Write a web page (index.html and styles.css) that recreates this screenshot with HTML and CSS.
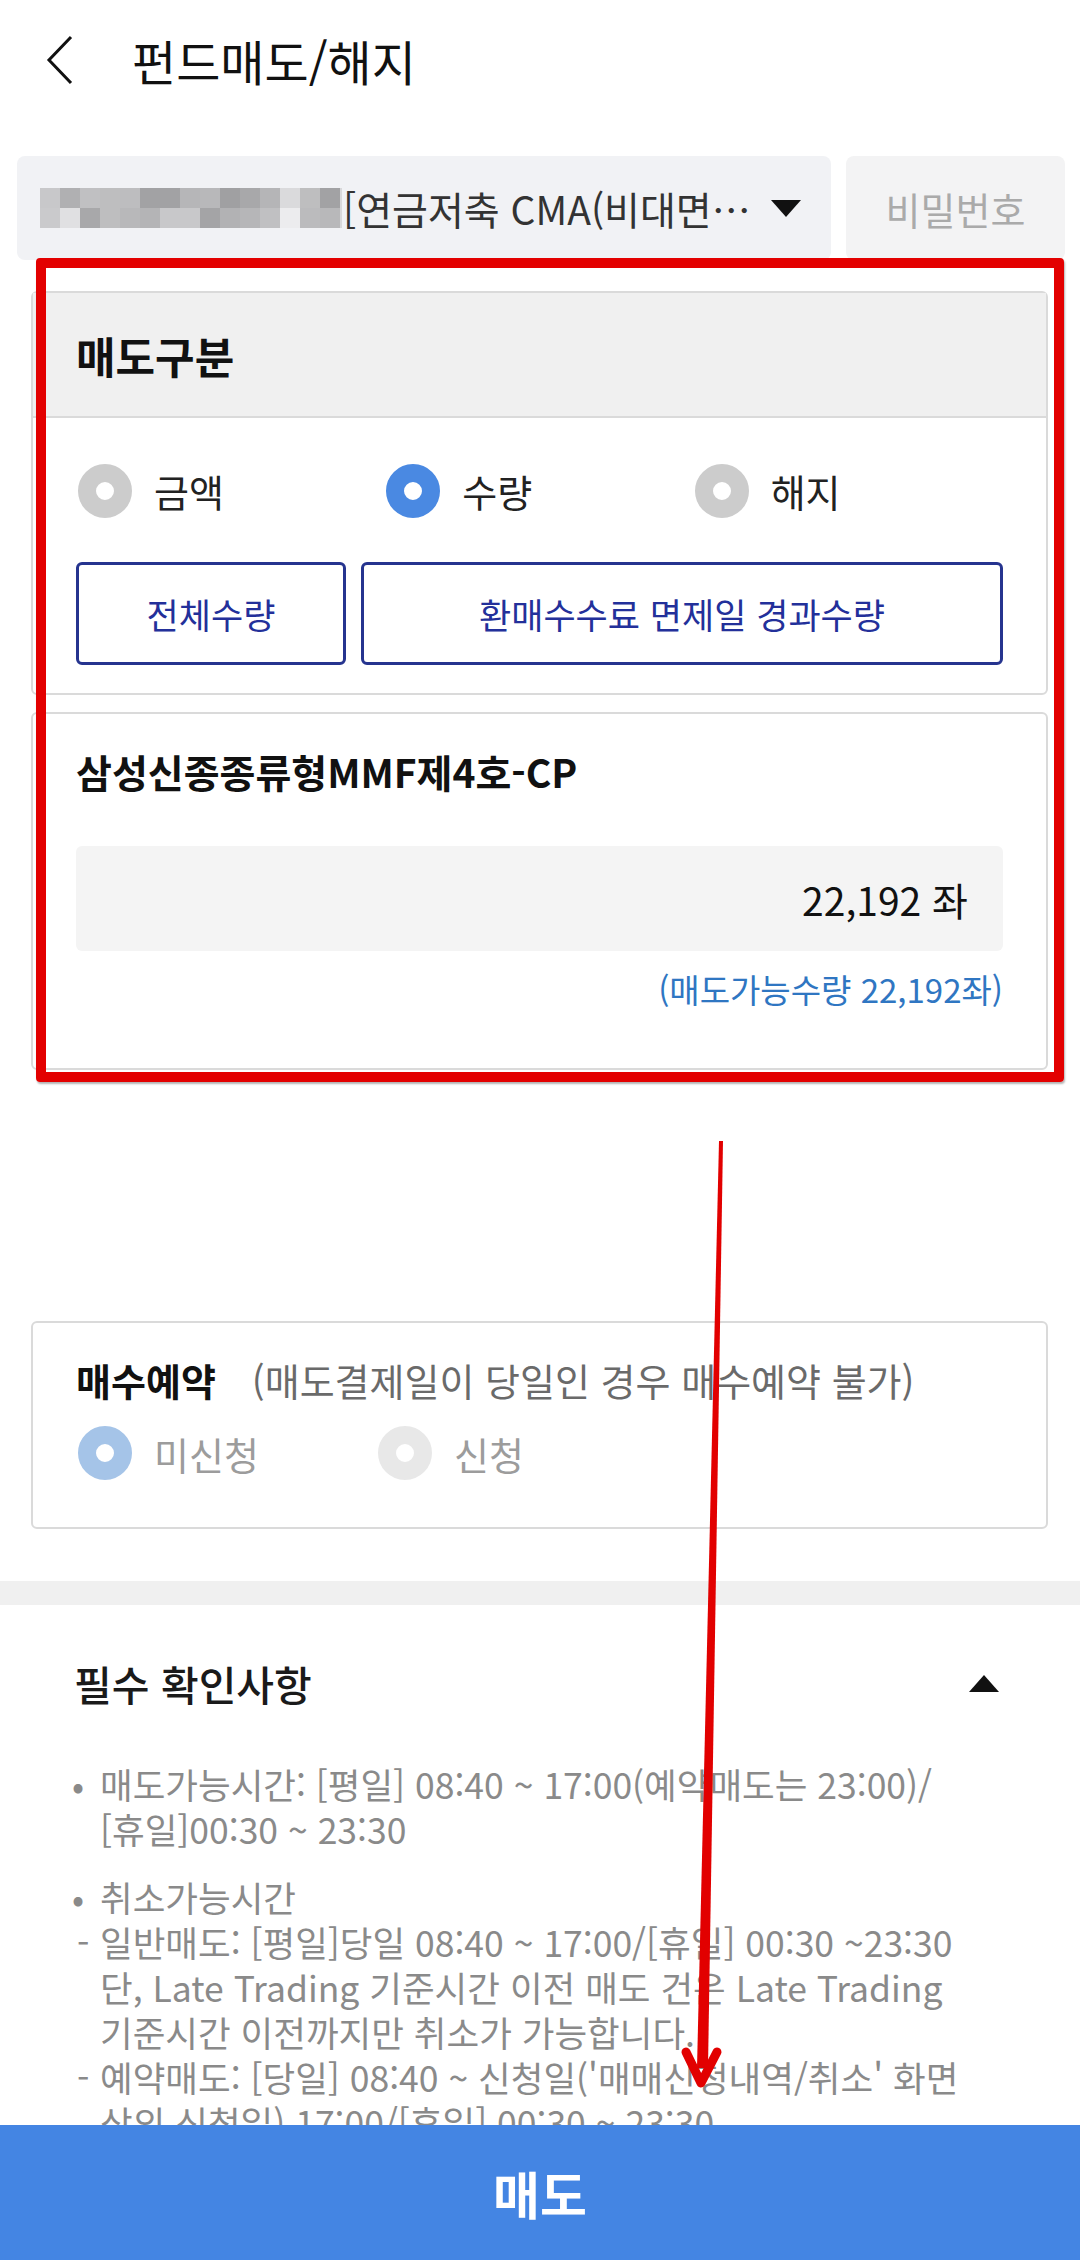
FILE: index.html
```html
<!DOCTYPE html>
<html lang="ko">
<head>
    <meta charset="UTF-8">
    <meta name="viewport" content="width=device-width, initial-scale=1.0">
    <title>펀드매도/해지</title>
    <link rel="stylesheet" href="styles.css">
</head>
<body>
    <div class="page">
        <div class="scroll">
            <header class="top-bar">
                <svg class="back" width="30" height="50" viewBox="0 0 30 50">
                    <polyline points="26,2 4,25 26,48" fill="none" stroke="#111" stroke-width="3"/>
                </svg>
                <h1>펀드매도/해지</h1>
            </header>

            <div class="account-row">
                <div class="account-select">
                    <svg class="masked" width="302" height="40" viewBox="0 0 302 40">
                        <rect x="0" y="0" width="20" height="20" fill="#c8c8ca"/>
                        <rect x="20" y="0" width="20" height="20" fill="#b0b0b2"/>
                        <rect x="40" y="0" width="20" height="20" fill="#c0c0c2"/>
                        <rect x="60" y="0" width="20" height="20" fill="#bebebf"/>
                        <rect x="80" y="0" width="20" height="20" fill="#bdbdbf"/>
                        <rect x="100" y="0" width="20" height="20" fill="#a2a2a4"/>
                        <rect x="120" y="0" width="20" height="20" fill="#a2a2a4"/>
                        <rect x="140" y="0" width="20" height="20" fill="#b6b6b8"/>
                        <rect x="160" y="0" width="20" height="20" fill="#b8b8ba"/>
                        <rect x="180" y="0" width="20" height="20" fill="#a0a0a2"/>
                        <rect x="200" y="0" width="20" height="20" fill="#a8a8aa"/>
                        <rect x="220" y="0" width="20" height="20" fill="#b5b5b7"/>
                        <rect x="240" y="0" width="20" height="20" fill="#dadadc"/>
                        <rect x="260" y="0" width="20" height="20" fill="#bebebf"/>
                        <rect x="280" y="0" width="20" height="20" fill="#a2a2a4"/>
                        <rect x="300" y="0" width="2" height="40" fill="#d8d8da"/>
                        <rect x="0" y="20" width="20" height="20" fill="#cacacc"/>
                        <rect x="20" y="20" width="20" height="20" fill="#e0e0e2"/>
                        <rect x="40" y="20" width="20" height="20" fill="#a8a8aa"/>
                        <rect x="60" y="20" width="20" height="20" fill="#bebebf"/>
                        <rect x="80" y="20" width="20" height="20" fill="#b8b8ba"/>
                        <rect x="100" y="20" width="20" height="20" fill="#b4b4b6"/>
                        <rect x="120" y="20" width="20" height="20" fill="#c8c8ca"/>
                        <rect x="140" y="20" width="20" height="20" fill="#c8c8ca"/>
                        <rect x="160" y="20" width="20" height="20" fill="#a4a4a6"/>
                        <rect x="180" y="20" width="20" height="20" fill="#b2b2b4"/>
                        <rect x="200" y="20" width="20" height="20" fill="#b6b6b8"/>
                        <rect x="220" y="20" width="20" height="20" fill="#c0c0c2"/>
                        <rect x="240" y="20" width="20" height="20" fill="#ececee"/>
                        <rect x="260" y="20" width="20" height="20" fill="#bbbbbd"/>
                        <rect x="280" y="20" width="20" height="20" fill="#b8b8ba"/>
                    </svg>
                    <span class="account-name">[연금저축 CMA(비대면…</span>
                    <span class="caret"></span>
                </div>
                <div class="password">비밀번호</div>
            </div>

            <section class="card">
                <div class="card-head">매도구분</div>
                <div class="card-body">
                    <div class="radio-row thirds">
                        <label class="radio"><span class="dot"></span>금액</label>
                        <label class="radio"><span class="dot on"></span>수량</label>
                        <label class="radio"><span class="dot"></span>해지</label>
                    </div>
                    <div class="btn-row">
                        <button class="outline-btn all">전체수량</button>
                        <button class="outline-btn">환매수수료 면제일 경과수량</button>
                    </div>
                </div>
            </section>

            <section class="card fund">
                <h2>삼성신종종류형MMF제4호-CP</h2>
                <div class="qty-input">22,192 좌</div>
                <p class="qty-available">(매도가능수량 22,192좌)</p>
            </section>

            <section class="card reserve">
                <div class="reserve-title">
                    <strong>매수예약</strong>
                    <span>(매도결제일이 당일인 경우 매수예약 불가)</span>
                </div>
                <div class="radio-row disabled">
                    <label class="radio"><span class="dot on"></span>미신청</label>
                    <label class="radio"><span class="dot"></span>신청</label>
                </div>
            </section>

            <div class="divider"></div>

            <section class="notice">
                <div class="notice-head">
                    <span>필수 확인사항</span>
                    <span class="up"></span>
                </div>
                <ul class="notice-list">
                    <li><span class="mark">•</span><span>매도가능시간: [평일] 08:40 ~ 17:00(예약매도는 23:00)/<br>[휴일]00:30 ~ 23:30</span></li>
                    <li>
                        <div class="line"><span class="mark">•</span><span>취소가능시간</span></div>
                        <div class="line"><span class="mark dash">-</span><span>일반매도: [평일]당일 08:40 ~ 17:00/[휴일] 00:30 ~23:30<br>단, Late Trading 기준시간 이전 매도 건은 Late Trading<br>기준시간 이전까지만 취소가 가능합니다.</span></div>
                        <div class="line"><span class="mark dash">-</span><span>예약매도: [당일] 08:40 ~ 신청일('매매신청내역/취소' 화면<br>상의 신청일) 17:00/[휴일] 00:30 ~ 23:30</span></div>
                    </li>
                </ul>
            </section>
        </div>

        <button class="sell-btn">매도</button>

        <!-- annotation drawn over the capture -->
        <div class="highlight-box"></div>
        <svg class="arrow" width="1080" height="2260" viewBox="0 0 1080 2260">
            <polygon points="719,1141 723,1141 708,2068 697,2068" fill="#e20000"/>
            <polyline points="686,2052 701,2083 717,2052" fill="none" stroke="#e20000" stroke-width="9" stroke-linecap="round" stroke-linejoin="round"/>
        </svg>
    </div>
</body>
</html>
```

FILE: styles.css
```css
body {
    margin: 0;
    background: #fff;
    font-family: "Noto Sans CJK KR", "Noto Sans", sans-serif;
    color: #111;
}

.page {
    position: relative;
    height: 100vh;
    display: flex;
    flex-direction: column;
    overflow: hidden;
}

.scroll {
    flex: 1;
    overflow: hidden;
}

/* header */
.top-bar {
    height: 120px;
    display: flex;
    align-items: center;
    padding-left: 45px;
}

.back {
    display: block;
}

h1 {
    margin: 0 0 0 57px;
    font-size: 48px;
    font-weight: 400;
    color: #111;
}

/* account */
.account-row {
    display: flex;
    gap: 15px;
    margin-top: 36px;
    padding: 0 15px 0 17px;
    height: 104px;
}

.account-select {
    width: 814px;
    display: flex;
    align-items: center;
    padding-left: 23px;
    box-sizing: border-box;
    background: #f1f2f5;
    border-radius: 8px;
}

.masked {
    display: block;
    flex-shrink: 0;
}

.account-name {
    font-size: 39px;
    color: #333;
    white-space: nowrap;
    margin-left: 1px;
}

.caret {
    width: 0;
    height: 0;
    margin-left: 20px;
    border-left: 15px solid transparent;
    border-right: 15px solid transparent;
    border-top: 17px solid #111;
}

.password {
    flex: 1;
    display: flex;
    align-items: center;
    justify-content: center;
    background: #f3f3f4;
    border-radius: 8px;
    font-size: 38px;
    color: #aaa;
}

/* cards */
.card {
    margin: 31px 32px 0 31px;
    border: 2px solid #dadada;
    border-radius: 6px;
    background: #fff;
}

.card-head {
    height: 123px;
    display: flex;
    align-items: center;
    padding-left: 43px;
    background: #f0f0f0;
    border-bottom: 2px solid #dadada;
    font-size: 43px;
    font-weight: 700;
}

.card-body {
    padding: 45px 43px 28px;
}

.radio-row {
    display: flex;
    height: 54px;
}

.radio-row.thirds {
    display: grid;
    grid-template-columns: repeat(3, 1fr);
    padding-left: 2px;
}

.radio {
    display: flex;
    align-items: center;
    gap: 22px;
    font-size: 38px;
    color: #222;
}

.dot {
    width: 54px;
    height: 54px;
    box-sizing: border-box;
    border-radius: 50%;
    border: 18px solid #cccccc;
    background: #fff;
}

.dot.on {
    border-color: #4a89e2;
}

.btn-row {
    display: flex;
    gap: 15px;
    margin-top: 45px;
}

.outline-btn {
    height: 103px;
    flex: 1;
    background: #fff;
    border: 3px solid #26348f;
    border-radius: 6px;
    font-family: inherit;
    font-size: 35px;
    color: #23309a;
}

.outline-btn.all {
    flex: 0 0 270px;
}

.fund {
    margin-top: 17px;
    padding: 32px 43px 59px;
}

.fund h2 {
    margin: 0;
    font-size: 39px;
    line-height: 50px;
    font-weight: 700;
}

.qty-input {
    margin-top: 50px;
    height: 105px;
    display: flex;
    align-items: center;
    justify-content: flex-end;
    padding-right: 35px;
    background: #f4f4f4;
    border-radius: 6px;
    font-size: 39px;
    color: #111;
}

.qty-available {
    margin: 18px 0 0;
    text-align: right;
    font-size: 33px;
    line-height: 40px;
    color: #2f76c2;
}

.reserve {
    margin-top: 251px;
    padding: 31px 43px 47px;
}

.reserve-title {
    display: flex;
    align-items: center;
    gap: 36px;
    height: 50px;
}

.reserve-title strong {
    font-size: 38px;
    font-weight: 700;
}

.reserve-title span {
    font-size: 38px;
    color: #6a6a6a;
}

.reserve .radio-row {
    margin-top: 22px;
    padding-left: 2px;
}

.reserve .radio {
    width: 300px;
    color: #9c9c9c;
}

.disabled .dot {
    border-color: #e8e8e8;
}

.disabled .dot.on {
    border-color: #a5c4e8;
}

.divider {
    margin-top: 52px;
    height: 24px;
    background: #f0f0f0;
}

/* notice */
.notice {
    padding: 53px 81px 0 72px;
}

.notice-head {
    display: flex;
    justify-content: space-between;
    align-items: center;
    height: 50px;
    padding-left: 2px;
    font-size: 41px;
    font-weight: 500;
    color: #1a1a1a;
}

.up {
    width: 0;
    height: 0;
    border-left: 15px solid transparent;
    border-right: 15px solid transparent;
    border-bottom: 17px solid #111;
}

.notice-list {
    list-style: none;
    margin: 53px 0 0;
    padding: 0;
    font-size: 35.5px;
    line-height: 45px;
    color: #8a8a8a;
    white-space: nowrap;
}

.notice-list li {
    display: flex;
    flex-direction: column;
}

.notice-list li:first-child {
    flex-direction: row;
}

.notice-list li + li {
    margin-top: 23px;
}

.line {
    display: flex;
}

.mark {
    flex: 0 0 28px;
}

.mark.dash {
    padding-left: 5px;
    flex-basis: 23px;
}

/* bottom action */
.sell-btn {
    flex: 0 0 135px;
    border: none;
    background: #4485e3;
    color: #fff;
    font-family: inherit;
    font-size: 51px;
    font-weight: 700;
}

.highlight-box {
    position: absolute;
    left: 36px;
    top: 258px;
    width: 1028px;
    height: 824px;
    box-sizing: border-box;
    border: 10px solid #e30000;
    border-radius: 4px;
    box-shadow: 1px 2px 2px rgba(0, 0, 0, 0.3);
}

.arrow {
    position: absolute;
    left: 0;
    top: 0;
    pointer-events: none;
}
```
